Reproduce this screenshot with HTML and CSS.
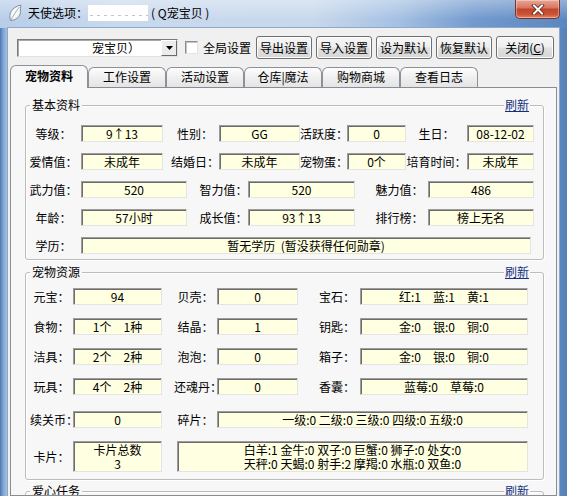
FILE: index.html
```html
<!DOCTYPE html>
<html lang="zh-CN">
<head>
<meta charset="utf-8">
<title>天使选项</title>
<link rel="stylesheet" href="styles.css">
</head>
<body>
<div class="window">
  <div class="titlebar">
    <svg class="app-icon" width="16" height="18" viewBox="0 0 16 18">
      <path d="M2.5 16.5 C0.5 10 3 3.5 13 1 C11.5 5.5 14 10 9.5 13.8 C7.5 15.6 5 16.3 2.5 16.5 Z" fill="#f6f8fa" stroke="#7f8c99" stroke-width="1"/>
      <path d="M2.8 16.2 C5.5 11.5 8 7 11.5 3" fill="none" stroke="#a3adb8" stroke-width="1"/>
    </svg>
    <span class="title">天使选项：</span><span class="redact"></span><span class="title title-tail">( Q宠宝贝 )</span>
    <div class="close">
      <svg width="14" height="11" viewBox="0 0 14 11">
        <path d="M3 1.5 L11 9.5 M11 1.5 L3 9.5" stroke="#5a1f16" stroke-width="3.6" stroke-linecap="square"/>
        <path d="M3 1.5 L11 9.5 M11 1.5 L3 9.5" stroke="#ffffff" stroke-width="2" stroke-linecap="square"/>
      </svg>
    </div>
  </div>

  <div class="client">
    <div class="toolbar">
      <div class="combo">
        <span class="combo-text">宠宝贝）</span>
        <span class="combo-btn">
          <svg width="7" height="4" viewBox="0 0 7 4"><path d="M0 0 H7 L3.5 4 Z" fill="#000"/></svg>
        </span>
      </div>
      <div class="check"><span class="check-box"></span><span>全局设置</span></div>
      <div class="buttons">
        <button class="btn">导出设置</button>
        <button class="btn">导入设置</button>
        <button class="btn">设为默认</button>
        <button class="btn">恢复默认</button>
        <button class="btn btn-wide">关闭(<span class="accel">C</span>)</button>
      </div>
    </div>

    <div class="tabs">
      <div class="tab tab-active">宠物资料</div>
      <div class="tab">工作设置</div>
      <div class="tab">活动设置</div>
      <div class="tab">仓库|魔法</div>
      <div class="tab">购物商城</div>
      <div class="tab">查看日志</div>
    </div>

    <div class="panel">
      <div class="group g-basic">
        <span class="group-title">基本资料</span>
        <a class="refresh">刷新</a>
        <div class="rows">
          <div class="row row-a">
            <span class="lbl">等级：</span><span class="fld">9↑13</span>
            <span class="lbl pl8">性别：</span><span class="fld">GG</span>
            <span class="lbl">活跃度：</span><span class="fld">0</span>
            <span class="lbl">生日：</span><span class="fld">08-12-02</span>
          </div>
          <div class="row row-a">
            <span class="lbl">爱情值：</span><span class="fld">未成年</span>
            <span class="lbl pl8">结婚日：</span><span class="fld">未成年</span>
            <span class="lbl">宠物蛋：</span><span class="fld">0个</span>
            <span class="lbl">培育时间：</span><span class="fld">未成年</span>
          </div>
          <div class="row row-b">
            <span class="lbl">武力值：</span><span class="fld">520</span>
            <span class="lbl pl12">智力值：</span><span class="fld">520</span>
            <span class="lbl pl16">魅力值：</span><span class="fld">486</span>
          </div>
          <div class="row row-b">
            <span class="lbl">年龄：</span><span class="fld">57小时</span>
            <span class="lbl pl12">成长值：</span><span class="fld">93↑13</span>
            <span class="lbl pl16">排行榜：</span><span class="fld">榜上无名</span>
          </div>
          <div class="row row-c">
            <span class="lbl">学历：</span><span class="fld">暂无学历  (暂没获得任何勋章)</span>
          </div>
        </div>
      </div>

      <div class="group g-res">
        <span class="group-title">宠物资源</span>
        <a class="refresh">刷新</a>
        <div class="res-grid">
          <span class="lbl pl4">元宝：</span><span class="fld">94</span>
          <span class="lbl pl12">贝壳：</span><span class="fld">0</span>
          <span class="lbl pl16">宝石：</span><span class="fld">红:1　蓝:1　黄:1</span>

          <span class="lbl pl4">食物：</span><span class="fld">1个　1种</span>
          <span class="lbl pl12">结晶：</span><span class="fld">1</span>
          <span class="lbl pl16">钥匙：</span><span class="fld">金:0　银:0　铜:0</span>

          <span class="lbl pl4">洁具：</span><span class="fld">2个　2种</span>
          <span class="lbl pl12">泡泡：</span><span class="fld">0</span>
          <span class="lbl pl16">箱子：</span><span class="fld">金:0　银:0　铜:0</span>

          <span class="lbl pl4">玩具：</span><span class="fld">4个　2种</span>
          <span class="lbl pl12">还魂丹：</span><span class="fld">0</span>
          <span class="lbl pl16">香囊：</span><span class="fld">蓝莓:0　草莓:0</span>

          <span class="lbl pl4 bottom">续关币：</span><span class="fld bottom">0</span>
          <span class="lbl pl12 bottom">碎片：</span><span class="fld bottom span-shard">一级:0 二级:0 三级:0 四级:0 五级:0</span>

          <span class="lbl pl4">卡片：</span>
          <span class="fld fld-card"><span>卡片总数</span><span>3</span></span>
          <span class="fld fld-card span-card"><span>白羊:1 金牛:0 双子:0 巨蟹:0 狮子:0 处女:0</span><span>天秤:0 天蝎:0 射手:2 摩羯:0 水瓶:0 双鱼:0</span></span>
        </div>
      </div>

      <div class="group g-task">
        <span class="group-title">爱心任务</span>
        <a class="refresh">刷新</a>
      </div>
    </div>
  </div>
</div>
</body>
</html>
```

FILE: styles.css
```css
* { box-sizing: border-box; }

html, body {
  margin: 0;
  padding: 0;
}

body {
  width: 567px;
  height: 496px;
  overflow: hidden;
  font-family: "Noto Sans CJK SC", "Noto Sans", sans-serif;
  font-size: 12px;
  color: #000;
}

.window {
  width: 567px;
  height: 496px;
  display: flex;
  flex-direction: column;
  overflow: hidden;
  background: linear-gradient(to right, #4b78b2 0, #7ea3d3 3px, #a2bfe2 7px, #a9c3e3 12px, #9ab8de 60%, #6e96ca 96%, #5580b9 100%);
}

/* ---------- title bar ---------- */
.titlebar {
  height: 28px;
  flex: none;
  display: flex;
  align-items: center;
  padding: 0 7px 2px 8px;
  background:
    linear-gradient(to bottom, rgba(255,255,255,0.35), rgba(255,255,255,0) 70%),
    linear-gradient(to right, #b7cde8 0%, #c9d9ed 20%, #c8d8ec 55%, #a5c1e3 70%, #7199cd 84%, #5b87c1 100%);
}

.app-icon {
  flex: none;
  margin-right: 4px;
}

.title {
  white-space: pre;
  line-height: 16px;
}

.title-tail {
  margin-left: 3px;
}

.redact {
  width: 60px;
  height: 16px;
  flex: none;
  background-color: #fff;
  background-image: repeating-linear-gradient(to right, #c4c4c4 0 3px, transparent 3px 7px);
  background-size: 100% 1px;
  background-position: 2px 10px;
  background-repeat: no-repeat;
}

.close {
  margin-left: auto;
  align-self: flex-start;
  width: 45px;
  height: 19px;
  border: 1px solid #7a3328;
  border-top: none;
  border-radius: 0 0 5px 5px;
  background: linear-gradient(#e9a696, #d77862 42%, #c2442c 52%, #cb5436 80%, #e08866);
  box-shadow: inset 0 0 0 1px rgba(255,255,255,0.35);
  display: flex;
  align-items: center;
  justify-content: center;
}

/* ---------- client ---------- */
.client {
  flex: 1;
  min-height: 0;
  margin: 0 8px;
  background: #f0f0f0;
  display: flex;
  flex-direction: column;
  box-shadow: 0 0 0 1px #8ea8c8;
}

.toolbar {
  flex: none;
  height: 31px;
  padding: 8px 0 0 9px;
  display: flex;
  align-items: center;
}

.combo {
  width: 161px;
  height: 18px;
  display: flex;
  background: #fff;
  border: 1px solid;
  border-color: #7a7a7a #e3e3e3 #e3e3e3 #7a7a7a;
  box-shadow: inset 1px 1px 0 #a8a8a8;
}

.combo-text {
  flex: 1;
  padding-left: 74px;
  line-height: 16px;
  white-space: nowrap;
  overflow: hidden;
}

.combo-btn {
  width: 16px;
  height: 16px;
  flex: none;
  background: #ececec;
  border: 1px solid;
  border-color: #ffffff #6a6a6a #6a6a6a #ffffff;
  display: flex;
  align-items: center;
  justify-content: center;
}

.check {
  display: flex;
  align-items: center;
  margin-left: 7px;
  gap: 5px;
  white-space: nowrap;
}

.check-box {
  width: 13px;
  height: 13px;
  background: #fff;
  border: 1px solid;
  border-color: #8e8e8e #e4e4e4 #e4e4e4 #8e8e8e;
  box-shadow: inset 1px 1px 0 #c4c4c4;
}

.buttons {
  display: flex;
  gap: 4px;
  margin-left: 5px;
}

.btn {
  width: 56px;
  height: 23px;
  padding: 0;
  font: inherit;
  color: #000;
  white-space: nowrap;
  border: 1px solid #707070;
  border-radius: 3px;
  background: linear-gradient(#f7f7f7, #eeeeee 48%, #e0e0e0 52%, #d6d6d6);
  box-shadow: inset 0 0 0 1px #fcfcfc;
}

.btn-wide { width: 58px; }

.accel { text-decoration: underline; }

/* ---------- tabs ---------- */
.tabs {
  flex: none;
  display: flex;
  align-items: flex-end;
  height: 23px;
  margin: 6px 0 -1px 2px;
  position: relative;
  z-index: 1;
}

.tab {
  width: 78px;
  height: 20px;
  margin-bottom: 1px;
  border: 1px solid #8d9097;
  border-bottom: none;
  border-radius: 6px 6px 0 0;
  background: linear-gradient(#fdfdfd, #efefef 50%, #e4e4e4);
  text-align: center;
  line-height: 17px;
  white-space: nowrap;
}

.tab-active {
  height: 23px;
  margin-bottom: 0;
  background: #f7f7f7;
  font-weight: bold;
  line-height: 20px;
}

/* ---------- panel ---------- */
.panel {
  flex: 1;
  min-height: 0;
  margin: 0 2px;
  border: 1px solid #898c95;
  background: #f7f7f7;
  padding: 17px 12px 0 14px;
  overflow: hidden;
}

.group {
  position: relative;
  border: 1px solid #bcbcbc;
  border-radius: 3px;
  box-shadow: inset 1px 1px 0 #fff, 1px 1px 0 #fff;
}

.g-basic { padding: 19px 0 5px 0; }
.g-res { margin-top: 12px; padding: 15px 0 7px 0; }
.g-task { margin-top: 11px; height: 80px; }

.group-title {
  position: absolute;
  top: -8px;
  left: 4px;
  padding: 0 2px;
  background: #f7f7f7;
  line-height: 14px;
}

.refresh {
  position: absolute;
  top: -8px;
  right: 13px;
  padding: 0 1px;
  background: #f7f7f7;
  color: #13307f;
  text-decoration: underline;
  line-height: 14px;
  cursor: pointer;
}

.rows {
  display: flex;
  flex-direction: column;
  gap: 11px;
}

.row {
  display: grid;
  height: 17px;
  align-items: center;
}

.row-a { grid-template-columns: 55px 82px 56px 81px 47px 59px 61px 67px; }
.row-b { grid-template-columns: 55px 106px 61px 107px 73px 106px; }
.row-c { grid-template-columns: 55px 450px; }

.lbl {
  text-align: center;
  white-space: nowrap;
  line-height: 17px;
}

.pl4 { padding-left: 4px; }
.pl8 { padding-left: 8px; }
.pl12 { padding-left: 12px; }
.pl16 { padding-left: 16px; }

.fld {
  height: 17px;
  background: #ffffe1;
  border: 1px solid;
  border-color: #9c9c9c #e4e4e4 #e4e4e4 #9c9c9c;
  box-shadow: inset 1px 1px 0 #6c6c6c;
  text-align: center;
  line-height: 15px;
  white-space: pre;
  overflow: hidden;
}

.res-grid {
  display: grid;
  grid-template-columns: 47px 89px 55px 81px 62px 168px;
  grid-template-rows: repeat(4, 17px) 20px 31px;
  row-gap: 13px;
  align-items: center;
}

.bottom { align-self: end; }

.span-shard { grid-column: 4 / 7; }

.fld-card {
  height: 31px;
  display: flex;
  flex-direction: column;
  justify-content: center;
  align-items: center;
  line-height: 14px;
}

.span-card {
  grid-column: 3 / 7;
  margin-left: 15px;
}
```
